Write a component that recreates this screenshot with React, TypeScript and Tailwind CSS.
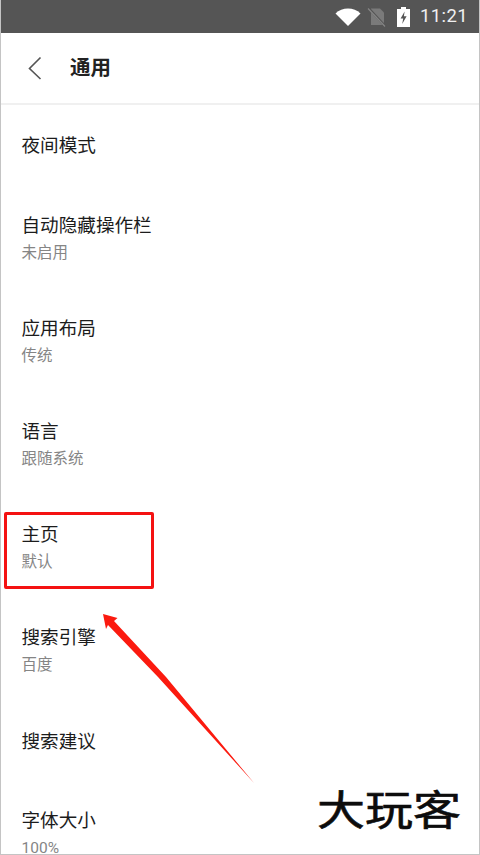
const cjk = "font-['Roboto','Noto_Sans_CJK_SC',sans-serif]";

function Row({ title, sub, h }: { title: string; sub?: string; h: string }) {
  return (
    <div className={`flex flex-col justify-center pl-[20.5px] ${sub ? "pt-[2px]" : ""} ${h}`}>
      <div className="text-[18.6px] leading-[26px] text-[#1c1c1c]">{title}</div>
      {sub && <div className="pt-px text-[15.5px] leading-[26px] text-[#858585]">{sub}</div>}
    </div>
  );
}

export default function App() {
  return (
    <div className={`relative h-[855px] w-[480px] overflow-hidden bg-white border-x border-b border-[#c4c4c4] ${cjk}`}>
      <div className="flex h-[33px] items-center justify-end bg-[#555555] pr-[11px] text-white">
        <svg width="26" height="18" viewBox="0 0 26 18" className="mr-[6px]">
          <path d="M0.5 5.5 C7 -1.2 19 -1.2 25.5 5.5 L13 18 Z" fill="#ffffff" />
        </svg>
        <svg width="20" height="20" viewBox="0 0 20 20" className="mr-[10px]">
          <path d="M4 1.5 H13 L17 5.5 V18 H4 Z" fill="#7a7a7a" />
          <path d="M1.5 1 L18.5 19.5" stroke="#555555" strokeWidth="2.4" />
          <path d="M1 1.5 L18 19.5" stroke="#858585" strokeWidth="1.2" />
        </svg>
        <svg width="13" height="20" viewBox="0 0 13 20" className="mr-[10px]">
          <path d="M4 0 H9 V2 H13 V20 H0 V2 H4 Z" fill="#ffffff" />
          <path d="M7.6 4.5 L3.6 11.5 H6.2 L5.2 17 L9.6 9.2 H6.9 Z" fill="#555555" />
        </svg>
        <span className="text-[18.5px] font-normal tracking-[0.4px] text-[#f0f0f0]">11:21</span>
      </div>
      <div className="flex h-[72px] items-center border-b-2 border-[#f0f0f0] pl-[26px]">
        <svg width="16" height="24" viewBox="0 0 16 24" fill="none" stroke="#555555" strokeWidth="1.6">
          <path d="M13.5 1.5 L2.5 12.5 L13.5 23" />
        </svg>
        <div className="ml-[27px] text-[20.5px] font-bold text-[#222222]">通用</div>
      </div>
      <Row title="夜间模式" h="h-[82px]" />
      <Row title="自动隐藏操作栏" sub="未启用" h="h-[103px]" />
      <Row title="应用布局" sub="传统" h="h-[103px]" />
      <Row title="语言" sub="跟随系统" h="h-[103px]" />
      <Row title="主页" sub="默认" h="h-[103px]" />
      <Row title="搜索引擎" sub="百度" h="h-[103px]" />
      <Row title="搜索建议" h="h-[80px]" />
      <Row title="字体大小" sub="100%" h="h-[103px]" />

      <div className="absolute left-[3px] top-[512px] h-[77px] w-[150px] rounded-[2px] border-[3px] border-[#f41212]" />
      <svg width="480" height="855" viewBox="0 0 480 855" className="pointer-events-none absolute -left-px top-0">
        <path d="M103 614 L117.5 618 L114 621 L166 677 L254 783 L158 677 L108 625 L106 629 Z" fill="#fb1a0f" />
      </svg>
      <div className="absolute left-[316px] top-[783px] origin-center scale-y-[0.86] text-[48px] font-normal leading-[56px] text-[#0c0c0c] [-webkit-text-stroke:0.7px_#0c0c0c]">
        大玩客
      </div>
    </div>
  );
}
